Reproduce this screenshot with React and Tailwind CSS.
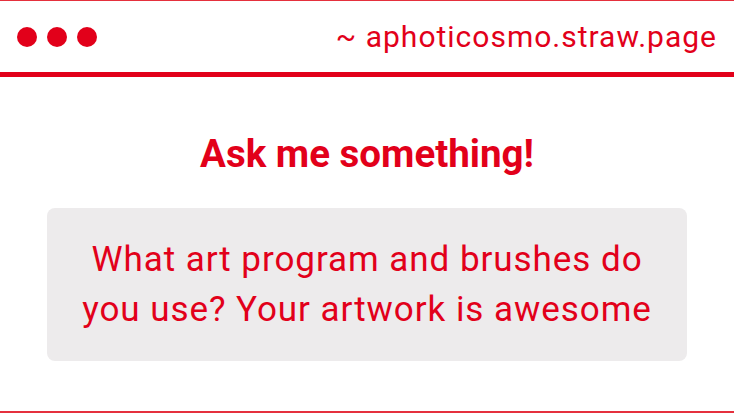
export default function App() {
  return (
    <div
      className="flex h-[413px] w-[734px] flex-col border-t border-b-2 border-[#e5303d] bg-white text-[#e2001a]"
      style={{ fontFamily: "Roboto, 'Liberation Sans', sans-serif" }}
    >
      <header className="flex h-[76px] shrink-0 items-center justify-between border-b-[5px] border-[#e2001a] pl-[17px] pr-[17px]">
        <div className="flex gap-[10px]">
          <span className="h-5 w-5 rounded-full bg-[#e2001a]" />
          <span className="h-5 w-5 rounded-full bg-[#e2001a]" />
          <span className="h-5 w-5 rounded-full bg-[#e2001a]" />
        </div>
        <span className="text-[30px] tracking-[1px]">~ aphoticosmo.straw.page</span>
      </header>
      <main className="flex flex-1 flex-col items-center pt-[58px]">
        <h1 className="text-[38.5px] font-bold leading-none">Ask me something!</h1>
        <div className="mt-[34px] w-[640px] rounded-lg bg-[#edebec] px-4 pt-[27px] pb-[26px] text-center text-[35px] leading-[50px] tracking-[0.95px]">
          What art program and brushes do
          <br />
          you use? Your artwork is awesome
        </div>
      </main>
    </div>
  );
}
